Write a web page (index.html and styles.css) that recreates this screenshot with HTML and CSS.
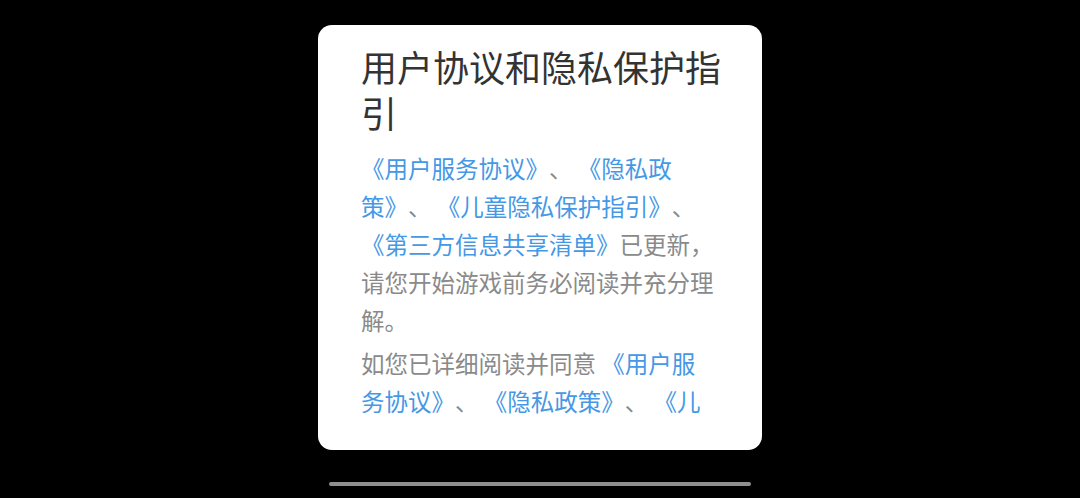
FILE: index.html
```html
<!DOCTYPE html>
<html>
<head>
    <meta charset="utf-8">
    <meta name="viewport" content="width=device-width">
    <link rel="stylesheet" href="styles.css">
</head>
<body>
    <div class="dialog">
        <h1 class="title">用户协议和隐私保护指引</h1>
        <div class="scroll">
            <p><a href="#">《用户服务协议》</a>、 <a href="#">《隐私政策》</a>、 <a href="#">《儿童隐私保护指引》</a>、 <a href="#">《第三方信息共享清单》</a>已更新，请您开始游戏前务必阅读并充分理解。</p>
            <p>如您已详细阅读并同意 <a href="#">《用户服务协议》</a>、 <a href="#">《隐私政策》</a>、 <a href="#">《儿童隐私保护指引》</a>、 <a href="#">《第三方信息共享清单》</a>，请点击“同意”开始游戏。</p>
        </div>
    </div>
    <div class="home-bar"></div>
</body>
</html>
```

FILE: styles.css
```css
html, body {
    margin: 0;
    height: 100%;
}
body {
    background: #000;
    font-family: "Noto Sans CJK SC", "Noto Sans", sans-serif;
    text-spacing-trim: space-all;
    display: flex;
    flex-direction: column;
    align-items: center;
    overflow: hidden;
}
.dialog {
    box-sizing: border-box;
    width: 444px;
    height: 425px;
    margin-top: 25px;
    padding: 18px 38px 25px 43px;
    background: #fff;
    border-radius: 14px;
    display: flex;
    flex-direction: column;
}
.title {
    margin: 0 0 14px 0;
    font-size: 36px;
    line-height: 46px;
    font-weight: normal;
    color: #333;
}
.scroll {
    flex: 1;
    overflow: hidden;
    padding-right: 8px;
}
.scroll p {
    margin: 0 0 5px 0;
    font-size: 23.5px;
    line-height: 38px;
    color: #8a8a8a;
}
.scroll a {
    color: #4598e6;
    text-decoration: none;
}
.home-bar {
    width: 422px;
    height: 4px;
    margin-top: 32px;
    border-radius: 2px;
    background: #8f8f8f;
}
```
